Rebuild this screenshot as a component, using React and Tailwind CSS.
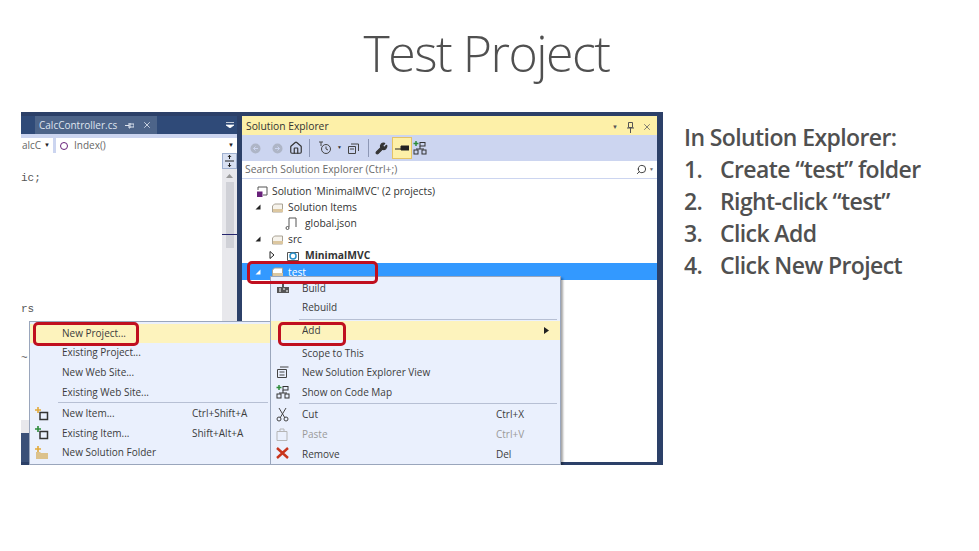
import { Home, Wrench, Search, X } from "lucide-react";

const font = { fontFamily: '"Open Sans", "Noto Sans", sans-serif' };

const steps = [
  ["1.", "Create “test” folder"],
  ["2.", "Right-click “test”"],
  ["3.", "Click Add"],
  ["4.", "Click New Project"],
];

function Folder({ light }) {
  return (
    <svg width="12" height="11" viewBox="0 0 12 11" className="shrink-0">
      <path d="M2.500 2h8v8h-10v-6z" fill={light ? "#fff" : "#f6f3ec"} stroke="#a9a294" strokeWidth="1" />
      <path d="M1 7h10v3H1z" fill="#dcc7a0" />
    </svg>
  );
}

function Caret({ open, white }) {
  if (open) {
    return (
      <svg width="6" height="6" viewBox="0 0 6 6" className="shrink-0">
        <path d="M5.500 0.500v5h-5z" fill={white ? "#fff" : "#222"} />
      </svg>
    );
  }
  return (
    <svg width="6" height="8" viewBox="0 0 6 8" className="shrink-0">
      <path d="M1 .5l4 3.500-4 3.500z" fill="#fff" stroke="#222" />
    </svg>
  );
}

function CodeMapIcon() {
  return (
    <svg width="14" height="14" viewBox="0 0 14 14" className="shrink-0">
      <path d="M3 0v5M.5 2.500h5" stroke="#2e8b3a" strokeWidth="1.500" />
      <rect x="7" y="1.500" width="5" height="3.500" fill="none" stroke="#333" />
      <path d="M7 5v3M3 8h8" stroke="#333" fill="none" />
      <rect x="1" y="9" width="4" height="4" fill="none" stroke="#333" />
      <rect x="9" y="9" width="4" height="4" fill="none" stroke="#333" />
    </svg>
  );
}

function NavCircle({ dir }) {
  return (
    <svg width="11" height="11" viewBox="0 0 11 11" className="shrink-0">
      <circle cx="5.500" cy="5.500" r="5" fill="#aeb5c6" />
      <path d={dir === "back" ? "M8 5.500H3.500M5.500 3.500l-2 2 2 2" : "M3 5.500h4.500M5.500 3.500l2 2-2 2"} stroke="#ccd5f0" fill="none" />
    </svg>
  );
}

function Thumbtack({ color = "#555" }) {
  return (
    <svg width="7" height="11" viewBox="0 0 7 11" className="shrink-0">
      <path d="M1.500 .5h4v5h-4zM0 6h7M3.500 6v5" fill="none" stroke={color} />
    </svg>
  );
}

function Tree() {
  return (
    <div className="flex-1 bg-white pt-[4px] text-[10.300px] text-[#333] leading-[16px]">
      <div className="flex items-center h-[16px] pl-[15px] gap-[4px]">
        <svg width="11" height="11" viewBox="0 0 11 11" className="shrink-0">
          <path d="M1 4V1h9v8H6" fill="none" stroke="#555" />
          <rect x="0" y="5.500" width="5.500" height="5.500" fill="#68217a" />
        </svg>
        <span>Solution 'MinimalMVC' (2 projects)</span>
      </div>
      <div className="flex items-center h-[16px] pl-[13px]">
        <Caret open />
        <span className="ml-[11px] flex"><Folder /></span>
        <span className="ml-[4px]">Solution Items</span>
      </div>
      <div className="flex items-center h-[16px] pl-[43px] gap-[8px]">
        <svg width="12" height="13" viewBox="0 0 12 13" className="shrink-0">
          <path d="M4 10V1h7v9" fill="none" stroke="#555" />
          <circle cx="2.500" cy="11" r="1.500" fill="none" stroke="#555" />
        </svg>
        <span>global.json</span>
      </div>
      <div className="flex items-center h-[16px] pl-[13px]">
        <Caret open />
        <span className="ml-[11px] flex"><Folder /></span>
        <span className="ml-[4px]">src</span>
      </div>
      <div className="flex items-center h-[16px] pl-[27px]">
        <Caret />
        <svg width="12" height="11" viewBox="0 0 12 11" className="ml-[12px] shrink-0">
          <path d="M.5 2.500h11v8H.5z" fill="none" stroke="#555" />
          <circle cx="6" cy="6" r="3" fill="none" stroke="#2a8fc7" strokeWidth="1.500" />
        </svg>
        <span className="ml-[6px] font-bold">MinimalMVC</span>
      </div>
      <div className="flex items-center h-[17px] pl-[13px] bg-[#3399ff] text-white">
        <Caret open white />
        <span className="ml-[11px] flex"><Folder light /></span>
        <span className="ml-[4px]">test</span>
      </div>
    </div>
  );
}

function MenuRow({ label, shortcut, icon, active, arrow, disabled, wide }) {
  return (
    <div
      className={`relative flex items-center h-[19.600px] ${wide ? "pl-[32px] pr-[19px]" : "pl-[31px] pr-[29px]"} ${
        active ? "bg-[#fdf3bd]" : ""
      } ${disabled ? "text-[#9a9a9a]" : "text-[#3c3c3c]"}`}
    >
      {icon && <span className="absolute left-[5px] top-[3px] flex">{icon}</span>}
      <span className="flex-1 truncate">{label}</span>
      {shortcut && <span className={wide ? "w-[60px]" : "w-[35px]"}>{shortcut}</span>}
      {arrow && (
        <svg width="5" height="7" viewBox="0 0 5 7" className="absolute right-[11px] top-[6px]">
          <path d="M0 0l5 3.500L0 7z" fill="#222" />
        </svg>
      )}
    </div>
  );
}

function Sep({ wide }) {
  return <div className={`h-px mr-[3px] ml-[28px] bg-[#b7c0d4] ${wide ? "my-[0.500px]" : "my-[1px]"}`} />;
}

const NewItemIcon = ({ color }) => (
  <svg width="14" height="14" viewBox="0 0 14 14">
    <path d="M5 5.500h7.500v7H5z" fill="none" stroke="#333" strokeWidth="1.500" />
    <path d="M3 0v6M0 3h6" stroke={color} strokeWidth="1.600" />
  </svg>
);

function ProjectMenu() {
  return (
    <div className="absolute left-[8px] top-[209px] w-[243px] h-[144px] overflow-hidden bg-[#eaf0fd] border border-[#9aa6bc] pt-[1.500px] text-[10px]">
      <MenuRow wide label="New Project..." active />
      <MenuRow wide label="Existing Project..." />
      <MenuRow wide label="New Web Site..." />
      <MenuRow wide label="Existing Web Site..." />
      <Sep wide />
      <MenuRow wide label="New Item..." shortcut="Ctrl+Shift+A" icon={<NewItemIcon color="#e2a93a" />} />
      <MenuRow wide label="Existing Item..." shortcut="Shift+Alt+A" icon={<NewItemIcon color="#2e8b3a" />} />
      <MenuRow
        wide
        label="New Solution Folder"
        icon={
          <svg width="14" height="14" viewBox="0 0 14 14">
            <path d="M1 6h4l1 1h7v6H1z" fill="#dcc28c" />
            <path d="M3 0v6M0 3h6" stroke="#e2a93a" strokeWidth="1.600" />
          </svg>
        }
      />
    </div>
  );
}

function FolderMenu() {
  return (
    <div className="absolute left-[249px] top-[164px] w-[291px] h-[189px] overflow-hidden bg-[#eaf0fd] border border-[#9aa6bc] shadow-[2px_2px_2px_rgba(0,0,0,0.35)] pt-[1.500px] text-[10px]">
      <MenuRow
        label="Build"
        icon={
          <svg width="14" height="12" viewBox="0 0 14 12">
            <path d="M1 5h12v6H1z" fill="#555" />
            <path d="M3 7h2M7 7h2M10 9h2M3 9h2" stroke="#fff" />
            <path d="M6 0h2v5H6z" fill="#555" />
          </svg>
        }
      />
      <MenuRow label="Rebuild" />
      <Sep />
      <MenuRow label="Add" active arrow />
      <div className="h-[3px]" />
      <MenuRow label="Scope to This" />
      <MenuRow
        label="New Solution Explorer View"
        icon={
          <svg width="13" height="13" viewBox="0 0 13 13">
            <path d="M1.500 3.500h9v8h-9zM4 1h8.500M3.500 6h5M3.500 9h5" fill="none" stroke="#444" />
          </svg>
        }
      />
      <MenuRow label="Show on Code Map" icon={<CodeMapIcon />} />
      <Sep />
      <MenuRow
        label="Cut"
        shortcut="Ctrl+X"
        icon={
          <svg width="13" height="14" viewBox="0 0 13 14">
            <path d="M3 0l6 10M10 0L4 10" stroke="#444" fill="none" />
            <circle cx="3" cy="11" r="2" fill="none" stroke="#444" />
            <circle cx="10" cy="11" r="2" fill="none" stroke="#444" />
          </svg>
        }
      />
      <MenuRow
        label="Paste"
        shortcut="Ctrl+V"
        disabled
        icon={
          <svg width="12" height="13" viewBox="0 0 12 13">
            <path d="M1 3.500h10v9H1zM4 3V1h4v2" fill="none" stroke="#b5b5b5" />
          </svg>
        }
      />
      <MenuRow
        label="Remove"
        shortcut="Del"
        icon={
          <svg width="13" height="12" viewBox="0 0 13 12">
            <path d="M1 1l11 10M12 1L1 11" stroke="#c8351d" strokeWidth="2.400" />
          </svg>
        }
      />
    </div>
  );
}

function IdeShot() {
  return (
    <div className="relative w-[642px] h-[353px] overflow-hidden bg-[#2c4068] flex pt-[4px] pr-[6px] pb-[3px] gap-[5px] text-[#333]">
      {/* editor side */}
      <div className="w-[216px] flex flex-col">
        <div className="h-[18px] flex bg-[#2f4a78] shrink-0">
          <div className="w-[14px]" />
          <div className="w-[122px] bg-[#4d6489] flex items-center pl-[4px] gap-[8px] text-[10px] text-[#dfe5f0]">
            <span>CalcController.cs</span>
            <svg width="9" height="7" viewBox="0 0 9 7" className="shrink-0">
              <path d="M0 3.500h4M4 1v5h1V1M5 2h4v3H5" fill="none" stroke="#dfe5f0" />
            </svg>
            <X size={10} />
          </div>
          <div className="flex-1 flex justify-end items-center pr-[3px]">
            <svg width="8" height="6" viewBox="0 0 8 6">
              <path d="M0 .5h8M0 3l4 3 4-3z" fill="#fff" stroke="#fff" strokeWidth=".7" />
            </svg>
          </div>
        </div>
        <div className="h-[19px] shrink-0 flex gap-[3px] bg-[#ccd5f0] text-[10px] text-[#666] pt-[4px]">
          <div className="w-[32px] bg-white flex items-center justify-end pr-[3px] gap-[3px]">
            <span>alcC</span>
            <span className="text-[6px] text-[#222]">▼</span>
          </div>
          <div className="flex-1 bg-white flex items-center pl-[4px] gap-[6px]">
            <span className="w-[8px] h-[8px] rounded-full border border-[#68217a] shrink-0" />
            <span className="flex-1">Index()</span>
            <span className="text-[6px] text-[#222] pr-[3px]">▼</span>
          </div>
        </div>
        <div className="flex-1 flex flex-col bg-white">
          <div className="flex-1 flex">
            <div className="flex-1 text-[11px] text-[#555] font-mono leading-none flex flex-col">
              <span className="mt-[20px]">ic;</span>
              <span className="mt-[120px]">rs</span>
              <span className="mt-[38px]">~</span>
            </div>
            <div className="relative w-[15px] bg-[#e8e8ec] flex flex-col items-center">
              <div className="w-full h-[16px] bg-[#d8e0f2] border border-[#9fb0d0] flex items-center justify-center">
                <svg width="9" height="12" viewBox="0 0 9 12">
                  <path d="M0 6h9M4.500 0v4M4.500 8v4" stroke="#222" />
                  <path d="M2.500 2l2-2 2 2zM2.500 10l2 2 2-2z" fill="#222" />
                </svg>
              </div>
              <svg width="7" height="4" viewBox="0 0 7 4" className="mt-[5px]">
                <path d="M3.500 0L7 4H0z" fill="#999" />
              </svg>
              <div className="w-[8px] h-[66px] mt-[4px] bg-[#d0d1d7]" />
              <div className="absolute left-0 top-[81px] w-full h-px bg-[#26266e]" />
            </div>
          </div>
          <div className="h-[13px] bg-[#e8e8ec]" />
          <div className="h-[29px] bg-[#3a5078]" />
        </div>
      </div>

      {/* solution explorer */}
      <div className="flex-1 flex flex-col bg-white">
        <div className="h-[19px] bg-[#fdf0a8] flex items-center pt-[3px] pl-[4px] pr-[5px] text-[10.300px] text-[#333]">
          <span className="flex-1">Solution Explorer</span>
          <span className="text-[6px] mr-[9px] text-[#555]">▼</span>
          <span className="mr-[8px] flex"><Thumbtack /></span>
          <X size={10} className="text-[#666]" />
        </div>
        <div className="h-[26px] bg-[#ccd5f0] flex items-center pl-[8px] text-[#333]">
          <NavCircle dir="back" />
          <span className="ml-[11px] flex"><NavCircle dir="forward" /></span>
          <Home size={14} className="ml-[6px]" />
          <span className="w-px h-[18px] bg-[#8d97b5] ml-[6px]" />
          <svg width="14" height="14" viewBox="0 0 14 14" className="ml-[8px] shrink-0">
            <circle cx="8" cy="8" r="4.500" fill="none" stroke="#444" />
            <path d="M8 5.500V8l2 1M1 1h4M3 1v4" fill="none" stroke="#444" />
          </svg>
          <span className="text-[5px] ml-[5px]">▼</span>
          <svg width="11" height="11" viewBox="0 0 11 11" className="ml-[6px] shrink-0">
            <path d="M.5 3.500h7v7h-7zM3 1h7.500v7M2 6h4" fill="none" stroke="#444" />
          </svg>
          <span className="w-px h-[18px] bg-[#8d97b5] ml-[9px]" />
          <Wrench size={13} className="ml-[6px] fill-[#333]" />
          <span className="ml-[4px] w-[20px] h-[22px] bg-[#fdf0a8] border border-[#e5c365] flex items-center justify-center">
            <svg width="14" height="6" viewBox="0 0 14 6">
              <path d="M0 4h6M6 1h8v4H6z" stroke="#222" fill="#222" />
            </svg>
          </span>
          <span className="ml-[1px] flex">
            <CodeMapIcon />
          </span>
        </div>
        <div className="h-[18px] bg-white border-b border-[#ccd5f0] flex items-center pl-[3px] pr-[3px] text-[10.300px] text-[#6b6b6b]">
          <span className="flex-1">Search Solution Explorer (Ctrl+;)</span>
          <Search size={11} className="-scale-x-100 text-[#333]" />
          <span className="text-[5px] ml-[2px]">▼</span>
        </div>
        <Tree />
      </div>

      <ProjectMenu />
      <FolderMenu />

      {/* red callouts */}
      <div className="absolute left-[12px] top-[210px] w-[106px] h-[24px] border-[3px] border-[#c00f1f] rounded-[5px]" />
      <div className="absolute left-[226px] top-[149px] w-[131px] h-[23px] border-[3px] border-[#c00f1f] rounded-[5px]" />
      <div className="absolute left-[257px] top-[210px] w-[68px] h-[24px] border-[3px] border-[#c00f1f] rounded-[5px]" />
    </div>
  );
}

export default function App() {
  return (
    <div className="w-[979px] h-[551px] bg-white overflow-hidden" style={font}>
      <h1 className="w-[973px] h-[112px] pt-[18px] text-center text-[50px] leading-[70px] font-light tracking-[-1.500px] text-[#505050]">
        Test Project
      </h1>
      <div className="flex pl-[21px] gap-[21px]">
        <IdeShot />
        <div className="pt-[9px] text-[23px] leading-[32px] font-semibold tracking-[-0.600px] text-[#505050]">
          <div>In Solution Explorer:</div>
          {steps.map(([n, text]) => (
            <div key={n} className="flex">
              <span className="w-[36px]">{n}</span>
              <span>{text}</span>
            </div>
          ))}
        </div>
      </div>
    </div>
  );
}
